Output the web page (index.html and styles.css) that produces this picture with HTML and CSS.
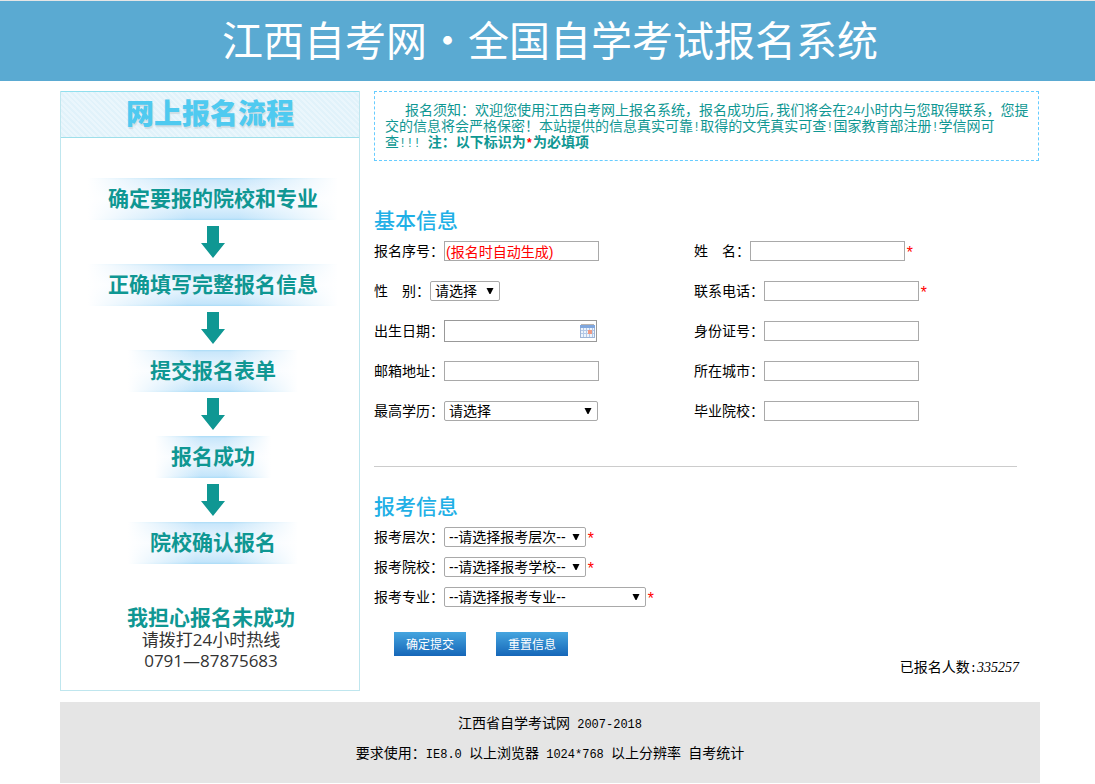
FILE: index.html
```html
<!DOCTYPE html>
<html lang="zh-CN">
<head>
  <meta charset="UTF-8">
  <meta name="viewport" content="width=device-width, initial-scale=1.0">
  <title>江西自考网·全国自学考试报名系统</title>
  <link rel="stylesheet" href="styles.css">
</head>
<body>
  <header class="top">
    <h1>江西自考网<span class="dot">•</span>全国自学考试报名系统</h1>
  </header>

  <div class="wrap">
    <div class="main">
      <!-- 报名流程 -->
      <aside class="flow">
        <h2>网上报名流程</h2>
        <div class="flow-body">
          <div class="step step-long">确定要报的院校和专业</div>
          <svg class="arrow" viewBox="0 0 24 32"><path d="M6 0h12v17h6L12 32 0 17h6z"/></svg>
          <div class="step step-long">正确填写完整报名信息</div>
          <svg class="arrow" viewBox="0 0 24 32"><path d="M6 0h12v17h6L12 32 0 17h6z"/></svg>
          <div class="step step-mid">提交报名表单</div>
          <svg class="arrow" viewBox="0 0 24 32"><path d="M6 0h12v17h6L12 32 0 17h6z"/></svg>
          <div class="step step-short">报名成功</div>
          <svg class="arrow" viewBox="0 0 24 32"><path d="M6 0h12v17h6L12 32 0 17h6z"/></svg>
          <div class="step step-mid">院校确认报名</div>
          <div class="hotline">
            <strong>我担心报名未成功</strong>
            <span>请拨打24小时热线</span>
            <span>0791—87875683</span>
          </div>
        </div>
      </aside>

      <!-- 报名表单 -->
      <div class="content">
        <p class="notice">报名须知：欢迎您使用江西自考网上报名系统，报名成功后<span class="en">,</span>我们将会在<span class="en">24</span>小时内与您取得联系，您提交的信息将会严格保密！本站提供的信息真实可靠<span class="en">!</span>取得的文凭真实可查<span class="en">!</span>国家教育部注册<span class="en">!</span>学信网可<br>查<span class="en">!!! </span><b>注：以下标识为<span class="en red">*</span>为必填项</b></p>

        <form action="#" method="post">
          <h3>基本信息</h3>
          <div class="grid">
            <div class="row">
              <label for="number">报名序号：</label>
              <input class="text auto" type="text" id="number" value="(报名时自动生成)" readonly>
            </div>
            <div class="row">
              <label for="name">姓　名：</label>
              <input class="text" type="text" id="name"><span class="must">*</span>
            </div>
            <div class="row">
              <label for="sex">性　别：</label>
              <select class="sel-sex" id="sex"><option>请选择</option><option>男</option><option>女</option></select>
            </div>
            <div class="row">
              <label for="phone">联系电话：</label>
              <input class="text" type="text" id="phone"><span class="must">*</span>
            </div>
            <div class="row">
              <label for="birth">出生日期：</label>
              <div class="date">
                <input type="text" id="birth">
                <svg viewBox="0 0 15 14">
                  <rect x="0.5" y="1.5" width="14" height="12" fill="#eef4fc" stroke="#9db4d6"/>
                  <path d="M0 1h15v3H0z" fill="#7fa6dd"/>
                  <path d="M1 0h13v1H1z" fill="#b9b4b0"/>
                  <path d="M1 6.5h13M1 9.5h13M3.5 4v9M6.5 4v9M9.5 4v9M12.5 4v9" stroke="#b3c8e6" fill="none"/>
                  <path d="M8 6h4v4H8z" fill="#ee9a84"/>
                </svg>
              </div>
            </div>
            <div class="row">
              <label for="idcard">身份证号：</label>
              <input class="text" type="text" id="idcard">
            </div>
            <div class="row">
              <label for="email">邮箱地址：</label>
              <input class="text" type="text" id="email">
            </div>
            <div class="row">
              <label for="city">所在城市：</label>
              <input class="text" type="text" id="city">
            </div>
            <div class="row">
              <label for="edu">最高学历：</label>
              <select class="sel-edu" id="edu"><option>请选择</option></select>
            </div>
            <div class="row">
              <label for="school">毕业院校：</label>
              <input class="text" type="text" id="school">
            </div>
          </div>

          <hr>

          <h3>报考信息</h3>
          <div class="list">
            <div class="row">
              <label for="level">报考层次：</label>
              <select class="sel-level" id="level"><option>--请选择报考层次--</option></select><span class="must">*</span>
            </div>
            <div class="row">
              <label for="college">报考院校：</label>
              <select class="sel-level" id="college"><option>--请选择报考学校--</option></select><span class="must">*</span>
            </div>
            <div class="row">
              <label for="major">报考专业：</label>
              <select class="sel-major" id="major"><option>--请选择报考专业--</option></select><span class="must">*</span>
            </div>
          </div>

          <div class="buttons">
            <button type="submit">确定提交</button>
            <button type="reset">重置信息</button>
          </div>
        </form>

        <p class="count">已报名人数<span class="en">:</span><em>335257</em></p>
      </div>
    </div>

    <footer class="footer">
      <p>江西省自学考试网<span class="en"> 2007-2018</span></p>
      <p>要求使用：<span class="en">IE8.0 </span>以上浏览器<span class="en"> 1024*768 </span>以上分辨率<span class="en"> </span>自考统计</p>
    </footer>
  </div>
</body>
</html>
```

FILE: styles.css
```css
* {
  box-sizing: border-box;
}

body {
  margin: 0;
  background: #fff;
  color: #000;
  font: 14px/16px "Liberation Sans", "Noto Sans CJK SC", sans-serif;
}

h1, h2, h3, p {
  margin: 0;
}

/* 顶部 */
.top {
  padding: 0 0 6px 5px;
  border-top: 1px solid #e5e5e5;
  background: #5aaad2;
  color: #fff;
  text-align: center;
}

.top h1 {
  font: 400 41px/74px "Noto Sans CJK SC", sans-serif;
}

.top .dot {
  display: inline-block;
  width: 1em;
}

.wrap {
  padding: 10px 55px 0 60px;
}

.main {
  display: flex;
  align-items: flex-start;
  gap: 14px;
  padding-right: 1px;
}

/* 左侧流程 */
.flow {
  flex: 0 0 300px;
  border: 1px solid #bfe6ee;
  color: #0f9793;
  font-family: "Noto Sans CJK SC", sans-serif;
}

.flow h2 {
  padding-bottom: 4px;
  border-bottom: 1px solid #9edfea;
  box-shadow: 0 -1px 0 #8fdfee;
  background: repeating-linear-gradient(45deg, #eaf6fc 0, #eaf6fc 2px, #e1f2fa 2px, #e1f2fa 4px);
  color: #4fcaf0;
  font-size: 28px;
  font-weight: 900;
  line-height: 41px;
  text-align: center;
  text-shadow: 1px 2px 1px #cfdde4;
}

.flow-body {
  display: flex;
  flex-direction: column;
  align-items: center;
  gap: 6px;
  padding: 40px 0 18px 6px;
}

.step {
  padding-bottom: 4px;
  background:
    linear-gradient(90deg, #fff, transparent 40%, transparent 60%, #fff),
    linear-gradient(#a9dcf7, #c9e7fb 2px, #eef7fe 50%, #c3e5fb 40px, #a9dcf7);
  font-size: 21px;
  font-weight: 700;
  line-height: 38px;
  text-align: center;
  white-space: nowrap;
}

.step-long {
  width: 250px;
}

.step-mid {
  width: 170px;
}

.step-short {
  width: 116px;
}

.arrow {
  width: 24px;
  height: 32px;
  fill: #0f9793;
}

.hotline {
  display: flex;
  flex-direction: column;
  align-items: center;
  margin-top: 35px;
  padding: 0 4px 1px 0;
  color: #333;
  font: 17px/21px "Open Sans", "Noto Sans CJK SC", sans-serif;
}

.hotline strong {
  color: #0f9793;
  font-size: 21px;
  line-height: 24px;
}

/* 右侧内容 */
.content {
  flex: 1;
  min-width: 0;
}

.en {
  font-family: "Liberation Mono", monospace;
  font-size: 12px;
  line-height: 12px;
  white-space: pre-wrap;
}

.red {
  color: #f00;
}

.notice {
  padding: 10px 8px 10px 10px;
  border: 1px dashed #66ccff;
  color: #0f9793;
  text-indent: 20px;
}

h3 {
  color: #1fb0e6;
  font-size: 21px;
  font-weight: 500;
  line-height: 20px;
}

form {
  padding-top: 50px;
}

.grid {
  display: grid;
  grid-template-columns: 320px 1fr;
}

.list {
  padding-top: 5px;
}

.row {
  display: flex;
  align-items: center;
}

.grid .row {
  height: 40px;
}

.list .row {
  height: 30px;
}

.must {
  padding-top: 6px;
  color: #f00;
  font-family: "Liberation Mono", monospace;
  font-size: 16px;
}

input, select {
  margin: 0;
  border: 1px solid #a9a9a9;
  border-radius: 0;
  background-color: #fff;
  color: #000;
  font: 14px/16px "Liberation Sans", "Noto Sans CJK SC", sans-serif;
}

.text {
  width: 155px;
  height: 20px;
  padding: 1px;
}

.auto {
  color: #f00;
}

.date {
  position: relative;
}

.date input {
  width: 153px;
  height: 22px;
  padding: 1px 20px 1px 1px;
  border-color: #999;
}

.date svg {
  position: absolute;
  top: 4px;
  right: 2px;
  width: 15px;
  height: 14px;
}

select {
  height: 20px;
  padding: 0 4px;
  border-radius: 2px;
  appearance: none;
  background: #fff url("data:image/svg+xml,%3Csvg xmlns='http://www.w3.org/2000/svg' width='8' height='6'%3E%3Cpath d='M0.5 0h7L4.5 6h-1z'/%3E%3C/svg%3E") no-repeat right 5px center;
}

.sel-sex {
  width: 70px;
}

.sel-edu {
  width: 154px;
}

.sel-level {
  width: 142px;
}

.sel-major {
  width: 202px;
}

hr {
  margin: 35px 22px 30px 0;
  border: 0;
  border-top: 1px solid #ccc;
}

.buttons {
  display: flex;
  gap: 30px;
  padding: 20px 0 0 20px;
}

button {
  width: 72px;
  height: 24px;
  padding: 0;
  border: 0;
  background: linear-gradient(#45a5df, #1566b8);
  color: #fff;
  font: 12px/24px "Noto Sans CJK SC", sans-serif;
  cursor: pointer;
}

.count {
  padding: 3px 20px 0 0;
  text-align: right;
}

.count em {
  font-family: "Liberation Serif", serif;
}

/* 底部 */
.footer {
  margin-top: 11px;
  padding: 6px 0 15px;
  background: #e5e5e5;
  line-height: 30px;
  text-align: center;
}
```
